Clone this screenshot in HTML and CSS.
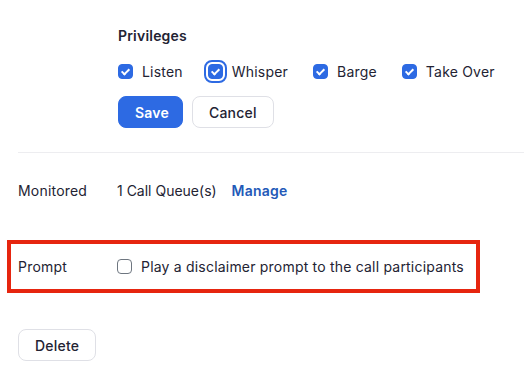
FILE: index.html
```html
<!DOCTYPE html>
<html lang="en">

<head>
    <meta charset="UTF-8">
    <meta name="viewport" content="width=device-width, initial-scale=1.0">
    <title>Monitoring settings</title>
    <link rel="stylesheet" href="styles.css">
</head>

<body>
    <div class="page">
        <div class="privileges">
            <h4 class="title">Privileges</h4>
            <div class="checks">
                <label class="check"><span class="box on"></span>Listen</label>
                <label class="check"><span class="box on focus"></span>Whisper</label>
                <label class="check"><span class="box on"></span>Barge</label>
                <label class="check"><span class="box on"></span>Take Over</label>
            </div>
            <div class="actions">
                <button class="btn primary">Save</button>
                <button class="btn">Cancel</button>
            </div>
        </div>

        <div class="row monitored">
            <div class="label">Monitored</div>
            <div class="value">1 Call Queue(s) <a href="#" class="link">Manage</a></div>
        </div>

        <div class="row prompt">
            <div class="label">Prompt</div>
            <label class="check"><span class="box"></span>Play a disclaimer prompt to the call participants</label>
        </div>

        <button class="btn delete">Delete</button>
    </div>
</body>

</html>
```

FILE: styles.css
```css
* {
    box-sizing: border-box;
    margin: 0;
    padding: 0;
}

body {
    font-family: Inter, "Noto Sans", sans-serif;
    font-size: 14px;
    letter-spacing: 0.2px;
    color: #232333;
    background: #fff;
}

.page {
    padding-left: 18px;
}

.privileges {
    padding: 28px 0 24px 100px;
    border-bottom: 1px solid #ededf0;
}

.title {
    font-size: 14px;
    font-weight: 600;
    line-height: 16px;
}

.checks {
    display: flex;
    margin-top: 20px;
    height: 14px;
    align-items: center;
}

.check {
    display: flex;
    align-items: center;
    gap: 9px;
    margin-right: 25px;
}

.box {
    position: relative;
    flex: none;
    width: 15px;
    height: 15px;
    border: 1px solid #6e7680;
    border-radius: 4px;
    background: #fff;
}

.box.on {
    background: #2d6ae3;
    border-color: #2d6ae3;
}

.box.on::after {
    content: "";
    position: absolute;
    left: 4px;
    top: 2px;
    width: 3px;
    height: 6px;
    border: solid #fff;
    border-width: 0 2px 2px 0;
    transform: rotate(45deg);
}

.box.focus {
    outline: 2px solid #2d6ae3;
    outline-offset: 2px;
}

.actions {
    display: flex;
    gap: 9px;
    margin-top: 18px;
}

.btn {
    font-family: inherit;
    font-size: 14px;
    letter-spacing: 0.2px;
    color: #232333;
    background: #fff;
    border: 1px solid #dfe0e6;
    border-radius: 8px;
    height: 32px;
    padding: 0 16px;
    font-weight: 500;
}

.btn.primary {
    background: #2d6ae3;
    border-color: #2d6ae3;
    color: #fff;
    font-weight: 600;
    width: 65px;
}

.row {
    display: flex;
    align-items: center;
}

.label {
    width: 99px;
}

.monitored {
    height: 75px;
}

.value {
    letter-spacing: 0;
}

.link {
    color: #2359b8;
    font-weight: 600;
    letter-spacing: 0.2px;
    text-decoration: none;
    margin-left: 11px;
}

.prompt {
    margin: 12px 0 0 -11px;
    width: 473px;
    height: 53px;
    padding-left: 7px;
    border: 4px solid #e6250f;
}

.prompt .check {
    margin-right: 0;
}

.delete {
    margin-top: 36px;
    width: 78px;
}
```
